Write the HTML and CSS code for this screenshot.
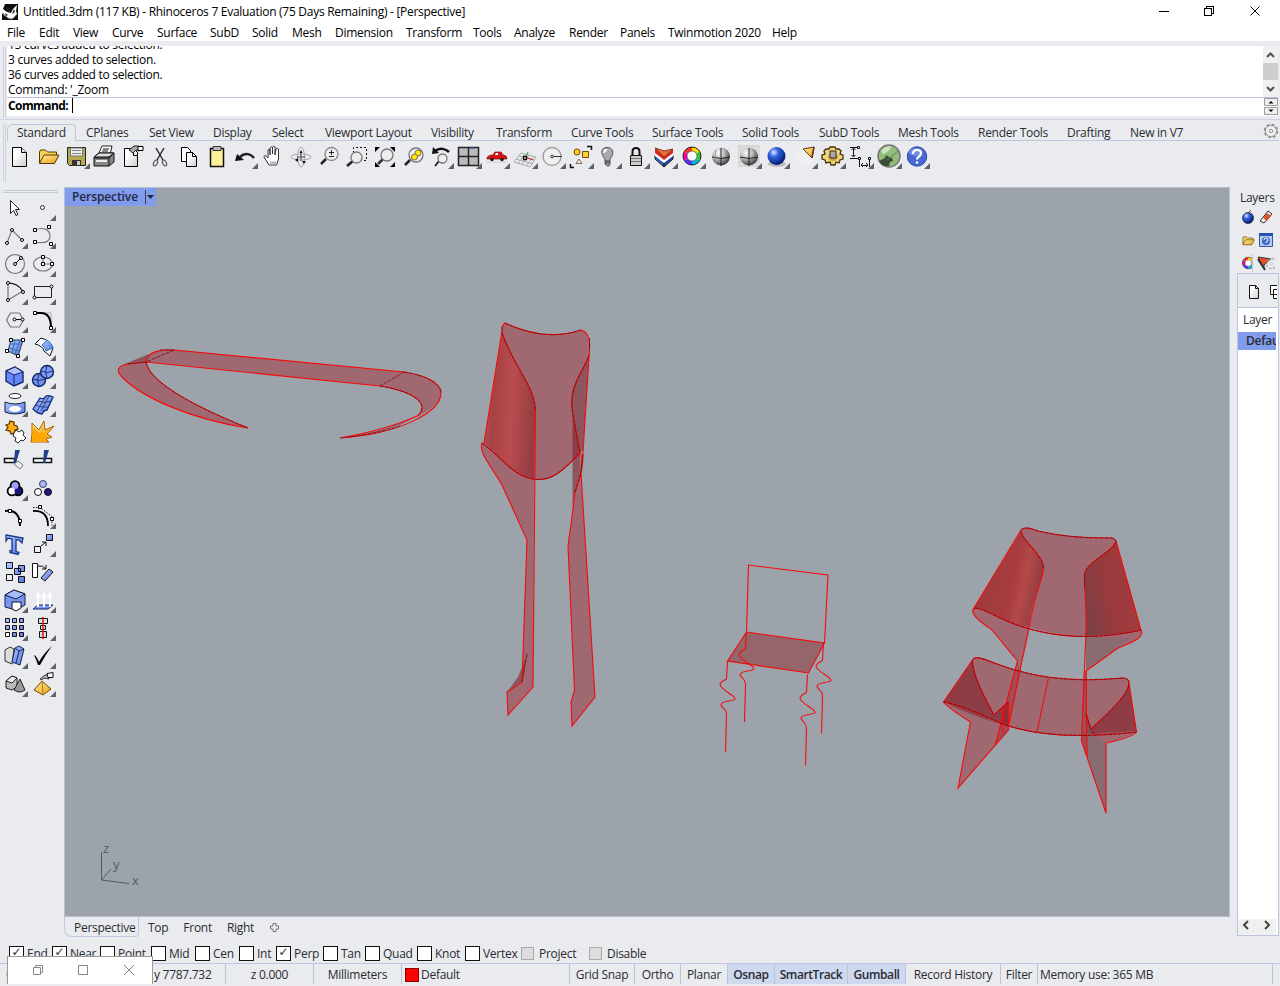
FILE: index.html
```html
<!DOCTYPE html>
<html lang="en">
<head>
<meta charset="utf-8">
<title>Untitled.3dm - Rhinoceros 7</title>
<link rel="stylesheet" href="styles.css">
</head>
<body>
<svg class="defs" width="0" height="0" aria-hidden="true">
  <defs>
    <linearGradient id="gold" x1="0" y1="0" x2="1" y2="1"><stop offset="0" stop-color="#fff0a0"/><stop offset="1" stop-color="#ee9b13"/></linearGradient>
    <linearGradient id="paper" x1="0" y1="0" x2="1" y2="1"><stop offset=".3" stop-color="#fff"/><stop offset="1" stop-color="#ccc"/></linearGradient>
    <linearGradient id="blue" x1="0" y1="0" x2="1" y2="1"><stop offset="0" stop-color="#b4c4ff"/><stop offset="1" stop-color="#5478e8"/></linearGradient>
    <radialGradient id="ball" cx=".35" cy=".3" r=".75"><stop offset="0" stop-color="#fff"/><stop offset=".45" stop-color="#bbb"/><stop offset="1" stop-color="#333"/></radialGradient>
    <radialGradient id="bball" cx=".35" cy=".3" r=".75"><stop offset="0" stop-color="#dbe7ff"/><stop offset=".35" stop-color="#2f63dd"/><stop offset="1" stop-color="#00126f"/></radialGradient>
    <radialGradient id="lball" cx=".35" cy=".3" r=".75"><stop offset="0" stop-color="#c7d3ff"/><stop offset="1" stop-color="#4d70df"/></radialGradient>
    <linearGradient id="side-left" x1="0" y1=".4" x2="1" y2=".55"><stop offset="0" stop-color="#a5555a"/><stop offset=".2" stop-color="#a94145"/><stop offset=".55" stop-color="#b94c4f"/><stop offset="1" stop-color="#943c41"/></linearGradient>
    <linearGradient id="back-left" x1="0" y1=".4" x2="1" y2=".7"><stop offset="0" stop-color="#9b3a3e"/><stop offset=".55" stop-color="#a83c40"/><stop offset=".7" stop-color="#b54848"/><stop offset="1" stop-color="#843b40"/></linearGradient>
    <linearGradient id="back-right" x1="0" y1=".7" x2="1" y2=".4"><stop offset="0" stop-color="#7a4246"/><stop offset=".4" stop-color="#983a3e"/><stop offset="1" stop-color="#a53b3e"/></linearGradient>
    <symbol id="wheel" viewBox="0 0 20 20"><g fill="none" stroke-width="4"><path d="M10 3a7 7 0 0 1 6 3.500" stroke="#fd0"/><path d="M16 6.500a7 7 0 0 1 0 7" stroke="#3c3"/><path d="M16 13.500a7 7 0 0 1-6 3.500" stroke="#0bd"/><path d="M10 17a7 7 0 0 1-6-3.500" stroke="#53f"/><path d="M4 13.500a7 7 0 0 1 0-7" stroke="#f0b"/><path d="M4 6.500A7 7 0 0 1 10 3" stroke="#f31"/></g><circle cx="10" cy="10" r="9" fill="none" stroke="#222"/><circle cx="10" cy="10" r="5" fill="#fff" stroke="#444" stroke-width=".7"/></symbol>
    <symbol id="folder" viewBox="0 0 22 18"><path d="M1.500 15V4l1-2h5l2 2h9v3" fill="#f7d358" stroke="#4f3a00"/><path d="M1.500 15.500 6 7h15l-4.500 8.500z" fill="url(#gold)" stroke="#4f3a00"/></symbol>
    <symbol id="cog" viewBox="0 0 16 16"><circle cx="8" cy="8" r="6.400" fill="none" stroke="#888" stroke-width="1.800" stroke-dasharray="2.800 2.200"/><circle cx="8" cy="8" r="5.600" fill="#eee" stroke="#999"/><circle cx="8" cy="8" r="1.600" fill="#fff" stroke="#888"/></symbol>
  </defs>
</svg>
<div class="app">
  <header class="titlebar">
    <svg class="app-icon" viewBox="0 0 16 16"><path fill="#111" d="M0 0h16v16H0z"/><path fill="#fff" d="M0 0h3L1 5l4 3 4 1 2-4 4-4-1 6 1 3-3 4-4 1-5-3-3-3z"/><path fill="#222" d="m4 3 3 1 1 4-3-2zM12 5l1 3-3 2zM3 9l3 2-2 1z"/><path d="m1 9 5 5 4 1 5-5" fill="none" stroke="#999"/></svg>
    <span class="title">Untitled.3dm (117 KB) - Rhinoceros 7 Evaluation (75 Days Remaining) - [Perspective]</span>
    <svg class="win-controls" viewBox="0 0 110 20" shape-rendering="crispEdges"><path d="M4 10.500h10M52.500 14.500h-3v-7h7v7zM51.500 7v-1.500h7v7H57" fill="none" stroke="#000"/><path d="m95.500 5.500 9 9m0-9-9 9" stroke="#000" shape-rendering="auto"/></svg>
  </header>
  <nav class="menu"><span>File</span><span>Edit</span><span>View</span><span>Curve</span><span>Surface</span><span>SubD</span><span>Solid</span><span>Mesh</span><span>Dimension</span><span>Transform</span><span>Tools</span><span>Analyze</span><span>Render</span><span>Panels</span><span>Twinmotion 2020</span><span>Help</span></nav>

  <section class="command">
    <div class="history">
      <div class="log"><div>15 curves added to selection.</div><div>3 curves added to selection.</div><div>36 curves added to selection.</div><div>Command: '_Zoom</div></div>
      <svg class="scroll" viewBox="0 0 15 51"><path fill="#f0f0f0" d="M0 0h15v51H0z"/><path fill="#cdcdcd" d="M0 17h15v17H0z"/><path d="m4 11 3.500-3.500L11 11M4 41l3.500 3.500L11 41" fill="none" stroke="#505050" stroke-width="2"/></svg>
    </div>
    <div class="prompt"><b>Command:</b><i class="caret"></i>
      <svg class="spin" viewBox="0 0 14 17"><path d="M.5.5h13v7H.5zM.5 9.500h13v7H.5z" fill="#f0f0f0" stroke="#999"/><path d="M4.500 5.500h5L7 3zM4.500 11.500h5L7 14z"/></svg>
    </div>
  </section>

  <section class="toolbar">
    <nav class="tabs"><span class="active">Standard</span><span>CPlanes</span><span>Set View</span><span>Display</span><span>Select</span><span>Viewport Layout</span><span>Visibility</span><span>Transform</span><span>Curve Tools</span><span>Surface Tools</span><span>Solid Tools</span><span>SubD Tools</span><span>Mesh Tools</span><span>Render Tools</span><span>Drafting</span><span>New in V7</span><svg class="cog"><use href="#cog"/></svg></nav>
    <div class="icons">
      <i class="t"><svg><path d="M6.500 4.500h9l5 5v14h-14z" fill="url(#paper)" stroke="#000"/><path d="M15.500 4.500v5h5" fill="#ddd" stroke="#000"/></svg></i>
      <i class="t"><svg><use href="#folder" x="4" y="5" width="22" height="18"/></svg></i>
      <i class="t m"><svg><path d="M5.500 4.500h18v18h-16l-2-2z" fill="#b5a84f" stroke="#222"/><path d="M8.500 5h12v8h-12z" fill="#eee" stroke="#777"/><path d="M10 7.500h9M10 10.500h9" stroke="#888"/><path d="M10 17h9v6h-9z" fill="#333"/><path d="M15 18h3v4h-3z" fill="#ccc"/></svg></i>
      <i class="t"><svg><path d="m9 10 3-7h10l-2 9" fill="#fff" stroke="#222"/><path d="m4 14 5-4h15v9l-5 4H4z" fill="#888" stroke="#111"/><path d="M4 15h15l4-4M19 23v-8M13 6h6M12 8h6" stroke="#111"/><path d="M6 17h11v2H6z" fill="#eee"/><path d="m4 14 5-4h15l-5 4z" fill="#ddd" stroke="#111"/></svg></i>
      <i class="t"><svg><path d="M6.500 5.500h9l4 4v14h-13z" fill="url(#paper)" stroke="#000"/><path d="M15.500 8.500v4h4" fill="none" stroke="#000"/><path d="m11 7 5-4h5v5l-3-1-3 3z" fill="#aaa" stroke="#222"/><path d="M20 3.500h5v4h-5z" fill="#fff" stroke="#000"/></svg></i>
      <i class="t"><svg><path d="m10 5 7 12m1-12-7 12" stroke="#222" stroke-width="1.400"/><ellipse cx="9.500" cy="20" rx="1.800" ry="3" transform="rotate(30 9.500 20)" fill="none" stroke="#667" stroke-width="1.300"/><ellipse cx="18.500" cy="20" rx="1.800" ry="3" transform="rotate(-30 18.500 20)" fill="none" stroke="#667" stroke-width="1.300"/></svg></i>
      <i class="t"><svg><path d="M7.500 4.500h6l3 3v11h-9z" fill="#fff" stroke="#000"/><path d="M12.500 9.500h6l4 4v10h-10z" fill="url(#paper)" stroke="#000"/><path d="M18.500 9.500v4h4" fill="none" stroke="#000"/></svg></i>
      <i class="t"><svg><path d="M8.500 5.500h13v18h-13z" fill="#fff09b" stroke="#111" stroke-width="1.500"/><path d="M11 3.500h8v4h-8z" fill="#bbb" stroke="#333"/></svg></i>
      <i class="t m"><svg><path d="M10 14c5-5 11-3 14 1" fill="none" stroke="#222" stroke-width="2.500"/><path d="m5 18 2-7 7 6z" fill="#111"/></svg></i>
      <i class="t"><svg><path d="m11 22-5-8c0-2 2-2 4 1V7q1-2 2 0v5-7q1.500-2 2.500 0v6-7q1.500-2 2.500 0v8l1-6q1.500-1.500 2.500 0v10l-2 6z" fill="#fff" stroke="#333"/><path d="M12 20h6" stroke="#bbb" stroke-width="3"/></svg></i>
      <i class="t"><svg><g fill="none" stroke="#aaa" stroke-width="1"><ellipse cx="15" cy="14" rx="3.500" ry="10"/><ellipse cx="15" cy="14" rx="10" ry="3"/></g><path d="M15 9v9M11 14h8" stroke="#444"/><path d="m15 7 1.500 3h-3zM18 21l2-3h-4zM9 17l3-2v4z" fill="#111"/></svg></i>
      <i class="t"><svg><path d="m7 21 5-5" stroke="#222" stroke-width="2.500"/><circle cx="17.500" cy="11" r="6.500" fill="#eee" stroke="#888" stroke-width="1.300"/><path d="M17.500 7v5m-2.500-2.500h5M15 13.500h5" stroke="#222"/></svg></i>
      <i class="t"><svg><path d="M11.500 10V4.500h13v13H20" fill="none" stroke="#111" stroke-dasharray="2"/><path d="m5 23 6-5" stroke="#222" stroke-width="2.500"/><circle cx="14.500" cy="14.500" r="5.500" fill="#eee" fill-opacity=".7" stroke="#777" stroke-width="1.300"/></svg></i>
      <i class="t"><svg><path d="M5 4h5L5 9zM25 4h-5l5 5zM5 24h5l-5-5zM25 24h-5l5-5z"/><path d="m8 21 5-5" stroke="#333" stroke-width="2.500"/><circle cx="17" cy="12" r="6" fill="#eee" stroke="#777" stroke-width="1.300"/></svg></i>
      <i class="t"><svg><path d="m7 22 5-5" stroke="#222" stroke-width="2.500"/><circle cx="18" cy="12" r="7" fill="#eee" stroke="#777" stroke-width="1.300"/><circle cx="20" cy="10" r="3" fill="#fe0" stroke="#865"/><circle cx="16.500" cy="14" r="3" fill="#fe0" stroke="#865"/></svg></i>
      <i class="t m"><svg><path d="M9 8c5-4 11-2 14 1" fill="none" stroke="#111" stroke-width="2.500"/><path d="m6 11 1-7 6 6z" fill="#111"/><path d="m9 23 4-5" stroke="#222" stroke-width="2"/><circle cx="16.500" cy="15.500" r="4.500" fill="#eee" stroke="#777" stroke-width="1.300"/></svg></i>
      <i class="t m"><svg><path d="M4.500 4.500h20v18h-20zM14.500 4v18M4 13.500h20" fill="#bbb" stroke="#222" stroke-width="1.500"/><path d="M16 5h5" stroke="#35a"/></svg></i>
      <i class="t m"><svg><path d="M5 14.500q2-3 6-2.500l2-3h6l2 3q4 0 4 4H5z" fill="#d31515" stroke="#8a0000" stroke-width=".7"/><path d="M14 10h2v2h-3z" fill="#fff"/><circle cx="10" cy="16.500" r="1.800" fill="#222"/><circle cx="20" cy="16.500" r="1.800" fill="#222"/><path d="M4 19h21" stroke="#ccc"/></svg></i>
      <i class="t m"><svg><path d="m4 19 7-9 15 4-6 10zM8 20l7-9M12 21l7-9M16 23l7-9M6 16l17 5M9 13l16 4" fill="none" stroke="#aaa"/><path d="m15 14 8 3" stroke="#b22"/><path d="m16 14 2-5" stroke="#2a3"/><path d="M13.500 13.500h3v3h-3z" fill="#eee" stroke="#111" stroke-width="1.300"/></svg></i>
      <i class="t m"><svg><circle cx="14" cy="13.500" r="9" fill="#eee" stroke="#999" stroke-width="1.300"/><path d="M14 13.500h10" stroke="#333"/><circle cx="14" cy="13.500" r="1.300" fill="#fff" stroke="#222"/></svg></i>
      <i class="t m"><svg><circle cx="11" cy="9" r="3" fill="#fc1" stroke="#764900"/><path d="M16.500 8.500h6v6h-6z" fill="#ffd331" stroke="#764900"/><path d="m13 16 3 4.500h-6z" fill="#eee" stroke="#865"/><path d="M21 3.500h4.500V7M4.500 21v3.500H8" fill="none" stroke="#111" stroke-width="1.500"/></svg></i>
      <i class="t m"><svg><path d="M11 16C6 10 7 4.500 13 4.500s8 5.500 3 11.500v5l-1 2h-2L11 21z" fill="#aaa" stroke="#555"/><path d="M10 10q0-3 3-3" stroke="#fff" stroke-width="2" fill="none"/><path d="M11 18h5m-5 2h5" stroke="#333"/></svg></i>
      <i class="t m"><svg><path d="M10.500 12V8.500q0-3.500 3.500-3.500t3.500 3.500V12" fill="none" stroke="#111" stroke-width="2"/><path d="M8.500 12.500h11v10h-11z" fill="#ccc" stroke="#111"/><path d="M9 15.500h10M9 18.500h10" stroke="#777"/></svg></i>
      <i class="t m"><svg><path d="m5 12 9 7v5l-9-8z" fill="#2a61c8" stroke="#222"/><path d="m14 19 9-7v4l-9 8z" fill="#24479b" stroke="#222"/><path d="m5 9 9 8v3l-9-7zM14 17l9-8v4l-9 7z" fill="#fff"/><path d="m5 5 9 9v3L5 10zM14 14l9-8v4l-9 7z" fill="#d22c20"/><path d="m5 5 9 3 9-2-9 8z" fill="#f26b35" stroke="#832"/></svg></i>
      <i class="t m"><svg><use href="#wheel" x="4" y="3" width="20" height="20"/></svg></i>
      <i class="t"><svg><circle cx="15" cy="13.500" r="9" fill="url(#ball)"/><path d="M6 14q9 3 18 0M15 5v18" fill="none" stroke="#222"/><path d="M10 7q-2 7 0 13" fill="none" stroke="#999"/></svg></i>
      <i class="t m"><svg><path d="M4 2h22v22H4z" fill="#ddd"/><path d="M4 3h22M4 7h22M4 11h22M4 15h22M4 19h22M4 23h22" stroke="#c4c4c4" stroke-dasharray="1 1"/><circle cx="15" cy="13.500" r="9" fill="url(#ball)"/><path d="M6 14q9 3 18 0M15 5v18" fill="none" stroke="#222"/></svg></i>
      <i class="t m"><svg><ellipse cx="15" cy="21" rx="9" ry="3" fill="#bbb"/><circle cx="14.500" cy="13" r="9" fill="url(#bball)"/></svg></i>
      <i class="t m"><svg><ellipse cx="15" cy="13" rx="9" ry="9" fill="#f0f0f2"/><path d="m13 6 11-2-2 11z" fill="url(#gold)" stroke="#631"/><path d="m24 4-2 11" stroke="#632" stroke-width="1.500"/></svg></i>
      <i class="t m"><svg><path d="m8 6 3 0 1-2h5l1 2h3l2 2-1 3 3 1v4l-3 1-1 3-3-1-1 3h-4l-1-3-4 1-1-3-3-1v-4l3-1-1-3z" fill="#eed47a" stroke="#46300a" stroke-width="1.300"/><ellipse cx="15" cy="14" rx="5" ry="4" fill="#d3a33c"/><path d="M12 8h6v7h-6z" fill="#aaa" stroke="#332b24"/></svg></i>
      <i class="t m"><svg><path d="M12 4.500H4M12 15.500H4M7.500 6v7M13.500 15v9M23.500 16v8M15 22.500h7M5.500 7l2-2 2 2M5.500 12l2 2 2-2M17 20l-2 2 2 2M20 20l2 2-2 2" fill="none" stroke="#111"/><path d="M11.500 3.500h2v2h-2zM12.500 14.500h2v2h-2zM22.500 14.500h2v2h-2z" fill="#fff" stroke="#111"/></svg></i>
      <i class="t m"><svg><circle cx="15" cy="13" r="11" fill="#91bc79" stroke="#777" stroke-width="1.500"/><path d="M7 8q4-5 10-5-1 6-8 8z" fill="#cce1bd"/><path d="m5 18 6-3 1-3 3 2 3 1 1 3-3 1-1 4q-7 1-10-5" fill="#394b35"/><path d="m13 17 11-9" stroke="#5c7b50"/></svg></i>
      <i class="t m"><svg><circle cx="15" cy="13.500" r="9.700" fill="#4868d3" stroke="#2446a5"/><ellipse cx="14" cy="9" rx="7" ry="4" fill="#90a7ee" opacity=".6"/><path d="M11 11q0-4 4-4t4 3.500c0 3-4 3-4 6" fill="none" stroke="#fff" stroke-width="2.200"/><circle cx="15" cy="19.500" r="1.300" fill="#fff"/></svg></i>
    </div>
  </section>

  <main class="work">
    <aside class="tools">
      <i class="t"><svg><path d="M9.500 5.500v13l3-3 2.500 5 2-1-2.500-5h4z" fill="#fff" stroke="#222"/></svg></i>
      <i class="t m"><svg><circle cx="13.500" cy="12.500" r="2" fill="#eee" stroke="#333"/></svg></i>
      <i class="t m"><svg><path d="m6 20 5-13 10 10" class="l"/><circle cx="6" cy="20" r="1.500" class="n"/><circle cx="11" cy="7" r="1.500" class="n"/><circle cx="21" cy="17" r="1.500" class="n"/></svg></i>
      <i class="t m"><svg><path d="M6 7c10-4 15 1 15 6s-4 8-15 6" class="l"/><path d="M4.500 5.500h3v3h-3zM4.500 17.500h3v3h-3zM18.500 2.500h3v3h-3zM20.500 19.500h3v3h-3z" class="n"/></svg></i>
      <i class="t m"><svg><circle cx="14" cy="13" r="9.500" class="l"/><path d="m14 13 6-6" stroke="#000"/><circle cx="14" cy="13" r="1.500" class="n"/><circle cx="20" cy="7" r="1.500" class="n"/></svg></i>
      <i class="t m"><svg><ellipse cx="14" cy="13" rx="9.500" ry="7" class="l"/><path d="M14 6v7h9" class="l"/><path d="M12.500 4.500h3v3h-3zM12.500 11.500h3v3h-3zM21.500 11.500h3v3h-3z" class="n"/></svg></i>
      <i class="t m"><svg><path d="M7 4v17l15-9Q17 4 7 4" class="l"/><path d="M7 4q10 0 15 9" fill="none" stroke="#000"/><circle cx="7" cy="4" r="1.500" class="n"/><circle cx="7" cy="21" r="1.500" class="n"/><circle cx="22" cy="13" r="1.500" class="n"/></svg></i>
      <i class="t m"><svg><path d="M5.500 7.500h17v11h-17z" fill="none" stroke="#222"/><circle cx="5.500" cy="18.500" r="1.500" class="n"/><circle cx="22.500" cy="7.500" r="1.500" class="n"/></svg></i>
      <i class="t m"><svg><path d="M9.500 6h9l4 7-4 7h-9l-4-7z" class="l"/><path d="M13 12.500h8" stroke="#000"/><circle cx="13.500" cy="12.500" r="1.500" class="n"/><circle cx="21.500" cy="12.500" r="1.500" class="n"/></svg></i>
      <i class="t m"><svg><path d="M6 6h16v15" stroke="#aaa" fill="none"/><path d="M6 6h6q10 0 10 15" fill="none" stroke="#000" stroke-width="2"/><path d="M4.500 4.500h3v3h-3zM20.500 19.500h3v3h-3z" class="n"/></svg></i>
      <i class="t m"><svg><path d="m10 5 12 0-5 16-10-5z" fill="url(#blue)" stroke="#234"/><path d="m14 5-3 13M19 5l-5 14M9 9h11M8 13l10 3" stroke="#37a"/><path d="M8.500 3.500h3v3h-3zM20.500 3.500h3v3h-3zM4.500 14.500h3v3h-3zM15.500 19.500h3v3h-3z" class="n"/></svg></i>
      <i class="t m"><svg><path d="m6 9 6-6q9 2 12 10l-3 8-6-5q-1-5-9-7z" fill="#fff" stroke="#111"/><path d="m13 10 5-5q4 2 6 8l-7 3q-1-4-4-6" fill="url(#blue)" stroke="#27c"/></svg></i>
      <i class="t m"><svg><path d="m5 8 9-4 8 5v10l-9 4-8-5z" fill="#6687fa" stroke="#172867" stroke-width="1.400"/><path d="m5 8 9-4 8 5-9 3z" fill="#afc0ff" stroke="#172867"/><path d="M13 12v11" stroke="#172867"/></svg></i>
      <i class="t m"><svg><circle cx="10" cy="17" r="6.500" fill="#7590ed" stroke="#112764" stroke-width="1.400"/><circle cx="18" cy="9" r="6.500" fill="#829bf4" stroke="#112764" stroke-width="1.400"/><path d="M12 8q6 3 12 0M4 16q6 3 12 0M18 3q-3 6 0 12M10 11q-3 6 0 12" fill="none" stroke="#1a357e"/></svg></i>
      <i class="t m"><svg><ellipse cx="14" cy="5" rx="6" ry="2.500" fill="#fff" stroke="#222"/><path d="M4 11q10 4 20 0v10q-10 4-20 0z" fill="url(#blue)" stroke="#123"/><ellipse cx="14" cy="18" rx="6" ry="3" fill="#fff"/></svg></i>
      <i class="t m"><svg><path d="m4 18 7-11q4 2 6-2 2-1 7 1l-6 13q-3 0-5 4-4 0-9-5z" fill="url(#blue)" stroke="#112a77" stroke-width="1.300"/><path d="m8 20 8-13M12 20l8-15M6 14q7 3 13 2M9 10q7 3 13 0" fill="none" stroke="#27447f"/></svg></i>
      <i class="t"><svg><g fill="#ffad15" stroke="#643b00" stroke-width="1.300"><path d="m5 6 3-1 1-3 4 1v3l3 1 1 3-3 1v3l-4 1-1-3-4-1 2-3z"/></g><path d="m13 14 2-3 3 2 3-2 2 3-1 2 3 3-3 3-2-1-3 3-3-2 1-3-3-2z" fill="#fff" stroke="#222"/></svg></i>
      <i class="t"><svg><path d="m3 4 7 7 5-9 1 9 9-4-7 8 5 3-6 2 3 3H2l1-8z" fill="url(#gold)" stroke="#b05d00"/><path d="m5 8 6 7 3-8 0 7 7-4-5 6 3 3-4 1 2 3H3v-7z" fill="#fda600"/></svg></i>
      <i class="t"><svg><path d="M3.500 11.500h10v4h-10z" fill="#fff" stroke="#111" stroke-width="1.500"/><path d="m17 14 5 4-3 4-6-5z" fill="#eee" stroke="#777"/><path d="M14 3h5l-4 13h-2z" fill="#203f8d"/></svg></i>
      <i class="t"><svg><path d="M4.500 11.500h18v4h-18z" fill="#fff" stroke="#111" stroke-width="1.500"/><path d="M15 3h5l-4 13h-2z" fill="#203f8d"/></svg></i>
      <i class="t m"><svg><circle cx="14" cy="10.500" r="5.300" fill="#000"/><circle cx="11" cy="16" r="5.300" fill="#000"/><circle cx="17" cy="16" r="5.300" fill="#000"/><circle cx="11" cy="16" r="3.500" fill="#fff"/><circle cx="17" cy="16" r="3.500" fill="#181582"/><circle cx="14" cy="10.500" r="3.500" fill="#9c9fff"/></svg></i>
      <i class="t"><svg><circle cx="14" cy="9" r="3.500" fill="#afb7ff" stroke="#345"/><circle cx="9" cy="17" r="3.500" fill="#fff" stroke="#111"/><circle cx="19" cy="17" r="3.500" fill="#22187a" stroke="#111"/></svg></i>
      <i class="t"><svg><path d="M4 8q15-2 15 15" fill="none" stroke="#000" stroke-width="2"/><path d="M7.500 6.500h3v3h-3zM17.500 16.500h3v3h-3z" class="n"/></svg></i>
      <i class="t m"><svg><path d="M4 4.500h7l12 9v9" fill="none" stroke="#111" stroke-dasharray="1.500"/><path d="M4 8q15-1 15 15" fill="none" stroke="#000" stroke-width="1.800"/><path d="M9.500 2.500h3v3h-3zM21.500 14.500h3v3h-3z" class="n"/></svg></i>
      <i class="t"><svg><path d="m5 4 17 3-1 5-3-3-3-.500v12l3 1-1 2-8-2v-2l2 .500V8L7 7 5 10z" fill="url(#blue)" stroke="#173986" stroke-width="1.300"/></svg></i>
      <i class="t m"><svg><path d="M17.500 3.500h6v6h-6z" fill="url(#blue)" stroke="#111"/><path d="M5.500 15.500h6v6h-6z" fill="#eee" stroke="#111"/><path d="m12 15 5-4m-4 0h4v4" fill="none" stroke="#111"/></svg></i>
      <i class="t"><svg><g fill="url(#blue)" stroke="#111"><path d="M5.500 3.500h6v6h-6zM17.500 6.500h6v6h-6zM13.500 9.500h6v6h-6zM17.500 17.500h6v6h-6z"/></g><path d="M5.500 15.500h6v6h-6z" fill="#eee" stroke="#111"/></svg></i>
      <i class="t"><svg><path d="M3.500 4.500h5v14h-5z" fill="#fff" stroke="#111"/><path d="M9 7q5-1 8 3m-4 0h4V6" fill="none" stroke="#111"/><path d="m12 19 8-9 4 3-8 9z" fill="url(#blue)" stroke="#111"/></svg></i>
      <i class="t m"><svg><path d="m4 8 9-5 11 4v11l-9 5-11-3z" fill="#7696f2" stroke="#12203f"/><path d="m4 8 9-5 11 4-9 5z" fill="#a7bbff" stroke="#12203f"/><path d="M11 15h9v6l-5 3-4-2z" fill="#fff" stroke="#111"/></svg></i>
      <i class="t m"><svg><path d="m4 22 5-4h15l-5 4z" fill="url(#blue)" stroke="#132567"/><path d="M9 20V8m6 12V8m6 12V8M7 10l2-3 2 3M13 10l2-3 2 3M19 10l2-3 2 3" stroke="#fff" stroke-width="2" fill="none"/></svg></i>
      <i class="t m"><svg><g fill="url(#blue)" stroke="#111"><path d="M4.500 3.500h4v4h-4zM11.500 3.500h4v4h-4zM18.500 3.500h4v4h-4zM4.500 10.500h4v4h-4zM11.500 10.500h4v4h-4zM18.500 10.500h4v4h-4zM11.500 17.500h4v4h-4zM18.500 17.500h4v4h-4z"/></g><path d="M4.500 17.500h4v4h-4z" fill="#fff" stroke="#111"/></svg></i>
      <i class="t m"><svg><path d="M9.500 3.500h9v5h-9zM11.500 10.500h5v4h-5zM10.500 16.500h7v6h-7z" fill="#ddd" stroke="#111"/><path d="M14 2v22" stroke="#d01616" stroke-width="1.500"/></svg></i>
      <i class="t m"><svg><path d="m4 7 5-3 4 2-2 15-7-3z" fill="#ddd" stroke="#333"/><path d="m14 5 4-2 5 3-4 16-8-3z" fill="url(#blue)" stroke="#14264b"/><path d="m14 5 4 3 5-2M18 8l-3 12" fill="none" stroke="#14264b"/></svg></i>
      <i class="t m"><svg><path d="M5 12q2 0 5 7 4-8 13-16-6 8-12 19H9q-2-6-4-10z" fill="#000"/></svg></i>
      <i class="t m"><svg><path d="m5 10 6-5 5 2v9l-5 3-6-2z" fill="#bbb" stroke="#222"/><path d="m5 10 6-5 5 2-5 5z" fill="#eee" stroke="#222"/><path d="m19 8 5 11q-5 4-11 0z" fill="#999" stroke="#222"/></svg></i>
      <i class="t m"><svg><path d="m5 19 8-9 9 8-8 6z" fill="url(#gold)" stroke="#784300"/><path d="m13 10 1 14" stroke="#b57b08"/><path d="m11 8 5-4h4v4l-5-1-2 2z" fill="#bbb" stroke="#333"/><path d="m18 2.500 6-1v5h-5z" fill="#fff" stroke="#111"/></svg></i>
    </aside>

    <section class="viewport">
      <svg class="scene" viewBox="65 188 1164 728">
        <g class="face">
          <path d="M146 362C147 352 160 349 174 350L404 372L380 386Z"/>
          <path d="M404 372C430 376 441 385 441 393C441 400 434 408 417 417Q422 413 422 407C421 396 399 389 380 386Z"/>
          <path d="M146 362L128 364C117 366 116 371 122 377C141 397 190 419 248 428C206 411 150 385 146 362Z"/>
          <path class="dark" d="M122 365L149 354L146 362ZM417 416Q384 436 340 438Q386 432 417 416Z"/>
        </g>
        <g class="edge">
          <path d="M174 350L404 372C430 376 441 385 441 393C441 412 400 434 340 438Q386 430 417 416Q422 413 422 407C421 396 399 389 380 386L146 362C150 385 206 411 248 428C190 419 141 397 122 377C116 371 117 366 128 364L146 362C147 352 160 349 174 350"/>
          <path class="hidden" d="M404 372L380 386M174 350L146 362L128 364M160 350Q167 350 174 350M404 372C430 376 441 385 441 393M380 386C399 389 421 396 422 407Q422 413 417 416M400 426Q378 434 340 438M146 362C150 385 206 411 248 428"/>
        </g>

        <g class="face">
          <path d="M505 323Q545 342 581 330C588 333 590 338 589 355C585 368 571 380 571 403L580 453C563 471 552 480 538 479.500L534 479L535.500 410C534 385 517 373 502 333Q502 325 505 323Z"/>
          <path d="M482 443C479 452 487 460 502 485L527 540L522 682L507 692L508 715L533 687L534 480C515 480 500 455 484 443Z"/>
          <path d="M581 473L575 492L572 517L568 546L574.500 690L571 702L572 726L595 697Z"/>
          <path class="shade-left" d="M502 333L484 443C500 455 515 480 534 479L535.500 410C534 385 517 373 502 333Z"/>
          <path class="dark" d="M589 355C585 368 571 380 571 403L580 453L583 450ZM572.500 405V508Q574 490 581 473L580 453ZM527 655L522 682L507 692L518 677Z"/>
        </g>
        <g class="edge">
          <path d="M484 443L502 331Q502 325 505 323Q545 342 581 330Q591 333 589.500 350L583 452Q583 465 581 473L595 697L572 726L571 702L574.500 690L568 546L572 517L575 492L581 473Q583 455 580 453L573 415C567 386 585 370 589 355M502 333C517 373 534 385 535.500 410L533 687L508 715L507 692L522 682L527 540L502 485C487 460 479 452 482 443C500 455 515 480 538 479.500C552 480 563 471 580 453"/>
          <path class="hidden" d="M505 323Q545 342 581 330M589.500 338V350M502 333C517 373 534 385 535.500 410M482 443C500 455 515 480 538 479.500C552 480 563 471 580 453L573 415C567 386 585 370 589 355M583 454L581 473L575 492M527 654L522 682M502 326V333"/>
        </g>

        <path class="seat" d="M746.500 632L824.500 643L808.500 673L727.500 661Z"/>
        <g class="edge">
          <path d="M746.500 632L748.500 565L828 575L824.500 643M746.500 632L824.500 643L808.500 673L727.500 661Z"/>
          <path id="leg" d="M727.500 661L726.500 679Q720 682 720 685C721 690 736 696 735 699C733 702 721 700 721 705C722 708 727 709 726.500 715L725.500 752"/>
          <use href="#leg" transform="translate(19 -30)"/><use href="#leg" transform="translate(96 -18.500)"/><use href="#leg" transform="translate(80 13.500)"/>
        </g>

        <g class="face">
          <path d="M1021 530C1025 526 1032 529 1038 531Q1068 538 1106 538Q1114 537 1116 541C1114 552 1085 562 1084.500 575L1086 636Q1058 636 1027 627L1030 618C1036 588 1043 580 1043.500 568C1044 556 1022 541 1021 530Z"/>
          <path d="M974 608C968 614 985 625 992 630L1017.500 661L1018 680L1030 628Q1000 618 974 608ZM1086 636Q1115 637 1141 630C1145 638 1130 643 1118 648L1086 671Z"/>
          <path d="M943.500 702L972.500 660C976 654 990 662 1000 665C1040 680 1080 682 1122 678Q1129 678 1129 683L1136.500 732Q1050 742 1000 723Z"/>
          <path d="M943.500 702Q950 710 970.500 722L958 788L1008.500 730V728Q980 716 943.500 702ZM1081.500 734V741L1106 813V743Q1131 738 1136.500 732Z"/>
          <path d="M1017.500 661L995.500 744L1008.500 730L1020 673ZM1084 671L1081.500 741L1087 757V671Z"/>
          <path class="back-left" d="M1021 531C1022 541 1044 556 1043.500 568C1043 580 1036 588 1030 618L1028 627Q1010 623 1000 618Q980 608 974 608Z"/>
          <path class="back-right" d="M1116 541C1114 552 1085 562 1084.500 575L1086 636Q1115 636 1141 630Z"/>
          <path class="dark" d="M943.500 702L972.500 660Q973 675 994 715L1008.500 702V727Q970 715 943.500 702ZM1129 683C1129 695 1105 716 1091 729L1086 714V734L1136.500 731Z"/>
          <path class="grey" d="M1086 637L1130 638L1118 648L1086 671ZM1091 735L1106 743V813L1087 757L1086 714Z"/>
        </g>
        <g class="edge">
          <path d="M974 608L1021 530C1025 526 1032 529 1038 531Q1068 538 1106 538Q1114 537 1116 541L1141 630C1090 642 1040 637 1000 618Q980 608 974 608C968 614 985 625 992 630L1017.500 661L995.500 744M1021 531C1022 541 1044 556 1043.500 568C1043 580 1036 588 1030 622L1008 728M1116 541C1114 552 1085 562 1084.500 575C1084 590 1087 605 1086 630L1081.500 741L1106 813V743Q1131 738 1136.500 732M1141 630C1145 638 1130 643 1118 648L1086 671L1087 757"/>
          <path d="M943.500 702L972.500 660C976 654 990 662 1000 665C1040 680 1080 682 1122 678Q1129 678 1129 683L1136.500 732Q1050 742 1000 723Q960 704 943.500 702Q948 708 970.500 722L958 788L1008.500 730V702L994 715Q972 676 972.500 660M1129 683C1129 695 1105 716 1091 729L1086 714M1048.500 678L1037 732M1003 706V733"/>
          <path class="hidden" d="M1021 530C1025 526 1032 529 1038 531Q1068 538 1106 538Q1114 537 1116 541M1021 531C1022 541 1044 556 1043.500 568M1116 541C1114 552 1085 562 1084.500 575V588M974 608Q980 608 1000 618C1040 637 1090 642 1141 630M972.500 660C976 654 990 662 1000 665C1040 680 1080 682 1122 678Q1129 678 1129 683C1129 695 1105 716 1091 729L1086 714M972.500 660Q972 676 994 715L1008.500 702M943.500 702Q960 704 1000 723Q1050 742 1136.500 732M1092 731l3 4"/>
        </g>
        <path class="axis" d="M101.500 852V880L129 883.500M101.500 880L111 869"/>
        <g class="axis-label"><text x="103" y="853">z</text><text x="113" y="869">y</text><text x="132" y="885">x</text></g>
      </svg>
      <div class="vp-label"><span>Perspective</span><svg viewBox="0 0 10 18"><path d="M-.5 2v14" stroke="#39415a"/><path d="M1 7h7l-3.500 4z" fill="#20273a"/></svg></div>
    </section>

    <aside class="panel">
      <div class="panel-title">Layers</div>
      <div class="panel-icons">
        <svg viewBox="0 0 18 18"><circle cx="9" cy="10" r="5.500" fill="url(#bball)" stroke="#222" stroke-width=".7"/><path d="m9 5 3-3" stroke="#543"/></svg>
        <svg viewBox="0 0 18 18"><path d="m3 13 8-10 4 3-8 9z" fill="#eee" stroke="#333"/><path d="m6 10 4-5 4 3-4 5z" fill="#d9542d"/></svg>
        <svg viewBox="0 0 18 18"><use href="#folder" x="3" y="4" width="13" height="12"/></svg>
        <svg viewBox="0 0 18 18"><path d="M2.500 2.500h13v13h-13z" fill="#b5caef" stroke="#37589b"/><path d="M2 2h14v3H2z" fill="#2952b0"/><circle cx="9" cy="10" r="4" fill="#3c65c7"/><path d="M7 9q0-2 2-2t2 2-2 2v1" fill="none" stroke="#fff"/></svg>
        <svg class="pick" viewBox="0 0 14 18"><use href="#wheel" x="3" y="2" width="14" height="14"/></svg>
        <svg viewBox="0 0 18 18"><path d="m1 3 6 12v-4l7-6z" fill="#ee4b28" stroke="#333"/><path d="m1 5 7 11" stroke="#234" stroke-width="2"/><use href="#cog" x="8" y="3" width="13" height="13" opacity=".5"/></svg>
      </div>
      <div class="panel-body">
        <div class="new-row"><svg viewBox="0 0 40 32"><path d="M12.500 11.500h6l3 3v10h-9z" fill="url(#paper)" stroke="#111"/><path d="M18.500 11.500v3h3" fill="none" stroke="#111"/><path d="M33.500 11.500h7v9h-7zM36.500 15.500h7v9h-7z" fill="#fff" stroke="#111"/></svg></div>
        <div class="layer-head">Layer</div><div class="layer-active">Default</div>
        <svg class="hscroll" viewBox="0 0 38 16"><path d="m10 2-4 4 4 4M27 2l4 4-4 4" fill="none" stroke="#444" stroke-width="2"/></svg>
      </div>
    </aside>
  </main>

  <nav class="view-tabs"><span class="active">Perspective</span><span>Top</span><span>Front</span><span>Right</span><svg viewBox="0 0 11 11"><path d="M4 1.500h3V4h2.500v3H7v2.500H4V7H1.500V4H4z" fill="none" stroke="#777"/></svg></nav>
  <section class="osnap"><label class="on">End</label><label class="on">Near</label><label>Point</label><label>Mid</label><label>Cen</label><label>Int</label><label class="on">Perp</label><label>Tan</label><label>Quad</label><label>Knot</label><label>Vertex</label><label class="off">Project</label><label class="off">Disable</label></section>
  <footer class="status"><span class="cplane">CPlane</span><span class="y">y 7787.732</span><span>z 0.000</span><span>Millimeters</span><span class="layer"><i></i>Default</span><span>Grid Snap</span><span>Ortho</span><span>Planar</span><span class="active">Osnap</span><span class="active">SmartTrack</span><span class="active">Gumball</span><span>Record History</span><span>Filter</span><span class="memory">Memory use: 365 MB</span></footer>
  <div class="child-window"><svg viewBox="0 0 144 27"><path d="M25.500 10.500h7v7h-7zM27.500 10V8.500h7v7H33M70.500 8.500h9v9h-9zM116 8l10 10m0-10-10 10" fill="none" stroke="#888"/></svg></div>
</div>
</body>
</html>
```
FILE: styles.css
```css
* { box-sizing: border-box; }
body { margin: 0; background: #eaebef; color: #292b32; font: 12px/15px "Open Sans", "Noto Sans", sans-serif; letter-spacing: -0.28px; }
.app { position: relative; width: 1280px; height: 986px; overflow: hidden; display: flex; flex-direction: column; }
.defs { position: absolute; }
span, label, b { white-space: nowrap; }

.titlebar { height: 22px; background: #fff; color: #000; display: flex; align-items: center; padding: 1px 15px 0 2px; gap: 5px; }
.app-icon { width: 16px; height: 16px; }
.win-controls { width: 110px; height: 20px; margin: -2px 0 0 auto; }
.menu { height: 19px; background: #fff; color: #000; padding: 3px 0 0 7px; display: grid; grid-template-columns: 32px 34px 39px 45px 53px 42px 40px 43px 71px 67px 41px 55px 51px 48px 104px 40px; }

.command { height: 79px; padding: 5px 2px 0 7px; border-bottom: 1px solid #cdd2e0; background: linear-gradient(#cdd2e0, #cdd2e0) 3px 6px / 1px 71px no-repeat, linear-gradient(#cdd2e0, #cdd2e0) 5px 6px / 1px 71px no-repeat; }
.history { height: 51px; background: #fff; color: #000; display: flex; justify-content: space-between; overflow: hidden; }
.log { height: 51px; padding-left: 1px; display: flex; flex-direction: column; justify-content: flex-end; }
.log div { flex: none; height: 15px; }
.scroll { width: 15px; height: 51px; }
.prompt { height: 19px; background: #fff; color: #000; border-top: 1px solid #b9c0d8; display: flex; align-items: flex-start; padding-left: 1px; }
.prompt b { letter-spacing: -0.6px; }
.caret { width: 1px; height: 15px; margin-left: 4px; background: #000; }
.spin { width: 14px; height: 17px; margin-left: auto; }

.toolbar { height: 67px; padding: 4px 1px 0 7px; background: linear-gradient(#cdd2e0, #cdd2e0) 3px 4px / 1px 57px no-repeat, linear-gradient(#cdd2e0, #cdd2e0) 5px 4px / 1px 57px no-repeat; }
.tabs { height: 17px; border-bottom: 1px solid #bfc8df; display: grid; grid-template-columns: 79px 63px 64px 59px 53px 106px 65px 75px 81px 90px 77px 79px 80px 89px 63px 133px 16px; }
.tabs span { line-height: 17px; }
.tabs .active { width: 69px; height: 17px; padding-left: 9px; line-height: 16px; background: #eaebef; border: 1px solid #bfc8df; border-bottom: 0; border-radius: 6px 4px 0 0; }
.cog { width: 16px; height: 16px; margin-top: -1px; }
.icons { display: flex; margin: 2px 0 0 0; }
.t { position: relative; width: 28px; height: 28px; flex: none; }
.icons .t { margin-left: 0; }
.t svg { width: 28px; height: 28px; display: block; overflow: visible; fill: none; }
.icons .t svg { margin-left: -1px; }
.m::after { content: ""; position: absolute; left: 21px; top: 20px; width: 6px; height: 6px; background: #606268; clip-path: polygon(100% 0, 100% 100%, 0 100%); }
.icons svg path:not([fill]):not([stroke]), .spin path:not([fill]) { fill: #000; }
.l { fill: none; stroke: #777; stroke-width: 1.2; }
.n { fill: #fff; stroke: #000; }

.work { height: 730px; display: flex; align-items: flex-start; }
.tools { width: 64px; height: 730px; padding: 8px 0 0 1px; display: grid; grid-template-columns: 28px 28px; grid-auto-rows: 28px; align-content: start; background: linear-gradient(#c5cada,#c5cada) 3px 3px / 55px 1px no-repeat, linear-gradient(#c5cada,#c5cada) 3px 5px / 55px 1px no-repeat; }
.viewport { position: relative; width: 1166px; height: 730px; border: 1px solid #b8c0d3; background: #9da3aa; }
.scene { width: 1164px; height: 728px; display: block; }
.vp-label { position: absolute; left: 0; top: 0; width: 91px; height: 18px; display: flex; justify-content: space-between; padding: 0 0 0 7px; background: #819bed; color: #20283e; font-weight: 600; line-height: 18px; letter-spacing: -.1px; }
.vp-label svg { width: 10px; height: 18px; overflow: visible; }
.face { fill: #a32f37; fill-opacity: .5; }
.face .dark { fill: #801820; fill-opacity: .55; }
.face .shade-left { fill: url(#side-left); fill-opacity: 1; }
.face .back-left { fill: url(#back-left); fill-opacity: 1; }
.face .back-right { fill: url(#back-right); fill-opacity: 1; }
.face .grey { fill: #647076; fill-opacity: .4; }
.seat { fill: #94656a; }
.edge { fill: none; stroke: #f50a0a; stroke-width: 1.1; }
.hidden { stroke: #7b080c; stroke-width: .8; stroke-dasharray: 4 1; }
.axis { fill: none; stroke: #555b62; }
.axis-label { fill: #555b62; font-size: 13px; }

.panel { width: 50px; height: 751px; padding: 3px 0 0 7px; overflow: hidden; }
.panel-title { padding-left: 3px; height: 18px; }
.panel-icons { display: grid; grid-template-columns: 18px 18px; grid-auto-rows: 23px; padding-left: 2px; }
.panel-icons svg { width: 18px; height: 18px; overflow: hidden; }
.panel-icons .pick { width: 14px; border-right: 1px solid #bac4df; }
.panel-body { width: 42px; height: 663px; margin-top: -4px; background: #fff; border: 1px solid #bac4df; overflow: hidden; display: flex; flex-direction: column; }
.new-row { height: 34px; flex: none; background: #eaebef; border-bottom: 1px solid #bac4df; }
.new-row svg { width: 40px; height: 32px; margin-left: -1px; }
.layer-head { height: 24px; flex: none; padding: 4px 0 0 5px; }
.layer-active { width: 38px; height: 18px; flex: none; padding-left: 8px; background: #819bed; font-weight: 600; line-height: 18px; overflow: hidden; }
.hscroll { width: 38px; height: 16px; margin-top: auto; background: #f0f0f0; flex: none; }

.view-tabs { height: 26px; margin-top: 0; padding-left: 64px; display: flex; align-items: flex-start; gap: 15px; }
.view-tabs span { line-height: 22px; }
.view-tabs .active { width: 75px; height: 20px; margin-right: -6px; padding-left: 9px; border: 1px solid #bfc8df; border-top: 0; border-radius: 0 0 4px 8px; }
.view-tabs svg { width: 11px; height: 11px; margin-top: 5px; }
.osnap { height: 21px; padding: 3px 0 0 9px; display: grid; grid-template-columns: 43px 48px 51px 44px 44px 37px 47px 42px 52px 48px 56px 68px 90px; border-bottom: 1px solid #bfc8df; }
.osnap label { height: 15px; display: flex; align-items: center; gap: 3px; }
.osnap label::before { content: ""; width: 13px; height: 13px; border: 1px solid #111; background: #fff; flex: none; }
.osnap .on::before { content: "✓"; font: 12px/11px "DejaVu Sans", sans-serif; text-align: center; letter-spacing: 0; }
.osnap .off::before { width: 11px; height: 11px; border-color: #aaa; background: #ddd; margin-right: 2px; }
.status { height: 20px; display: grid; grid-template-columns: 152px 74px 88px 88px 168px 65px 46px 47px 47px 73px 58px 95px 37px 235px; }
.status span { border-right: 1px solid #bac3da; line-height: 22px; text-align: center; overflow: hidden; }
.status .y, .status .memory { text-align: left; padding-left: 2px; }
.status .cplane { text-align: left; padding-left: 6px; }
.status .active { background: #ced8ee; font-weight: 600; letter-spacing: -.4px; }
.status .layer { display: flex; align-items: center; gap: 2px; padding: 2px 0 0 3px; }
.status .layer i { width: 14px; height: 14px; background: #f00; border: 1px solid #800; }
.child-window { position: absolute; left: 7px; top: 956px; width: 146px; height: 28px; background: #fff; border: 1px solid #999; border-bottom: 0; }
.child-window svg { width: 144px; height: 27px; display: block; }
```
